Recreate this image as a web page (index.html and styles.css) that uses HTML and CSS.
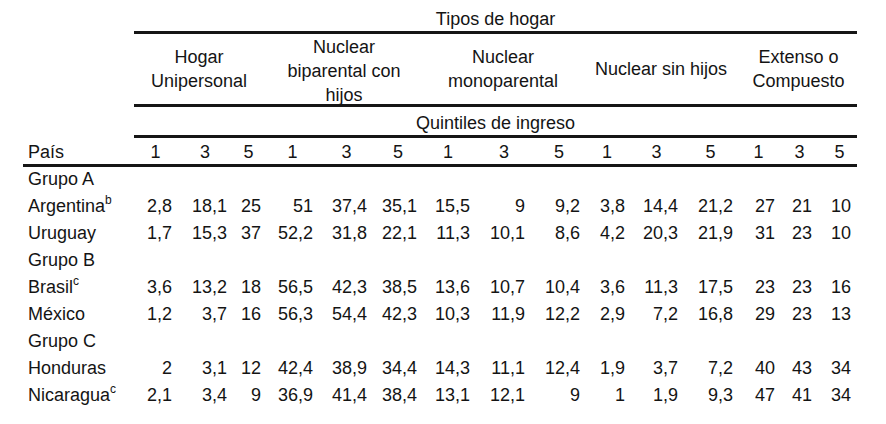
FILE: index.html
```html
<!DOCTYPE html>
<html lang="es">
<head>
<meta charset="utf-8">
<title>Tipos de hogar</title>
<link rel="stylesheet" href="styles.css">
</head>
<body>
<table class="tabla">
  <colgroup>
    <col class="c0"><col class="c1"><col class="c2"><col class="c3">
    <col class="c4"><col class="c5"><col class="c6">
    <col class="c7"><col class="c8"><col class="c9">
    <col class="c10"><col class="c11"><col class="c12">
    <col class="c13"><col class="c14"><col class="c15">
  </colgroup>
  <thead>
    <tr class="r-tipos">
      <td></td>
      <th colspan="15" class="ruled">Tipos de hogar</th>
    </tr>
    <tr class="r-grupos">
      <td></td>
      <th colspan="3" class="ruled"><div class="gt">Hogar<br>Unipersonal</div></th>
      <th colspan="3" class="ruled"><div class="gt tight">Nuclear<br>biparental con<br>hijos</div></th>
      <th colspan="3" class="ruled"><div class="gt">Nuclear<br>monoparental</div></th>
      <th colspan="3" class="ruled"><div class="gt">Nuclear sin hijos</div></th>
      <th colspan="3" class="ruled"><div class="gt">Extenso o<br>Compuesto</div></th>
    </tr>
    <tr class="r-quint">
      <td></td>
      <th colspan="15" class="ruled">Quintiles de ingreso</th>
    </tr>
    <tr class="r-pais">
      <th class="ruled pais">País</th>
      <th class="ruled">1</th><th class="ruled">3</th><th class="ruled">5</th>
      <th class="ruled">1</th><th class="ruled">3</th><th class="ruled">5</th>
      <th class="ruled">1</th><th class="ruled">3</th><th class="ruled">5</th>
      <th class="ruled">1</th><th class="ruled">3</th><th class="ruled">5</th>
      <th class="ruled">1</th><th class="ruled">3</th><th class="ruled">5</th>
    </tr>
  </thead>
  <tbody class="datos">
    <tr class="grupo"><td class="nombre">Grupo A</td><td colspan="15"></td></tr>
    <tr>
      <td class="nombre">Argentina<sup>b</sup></td>
      <td>2,8</td><td>18,1</td><td>25</td>
      <td>51</td><td>37,4</td><td>35,1</td>
      <td>15,5</td><td>9</td><td>9,2</td>
      <td>3,8</td><td>14,4</td><td>21,2</td>
      <td>27</td><td>21</td><td>10</td>
    </tr>
    <tr>
      <td class="nombre">Uruguay</td>
      <td>1,7</td><td>15,3</td><td>37</td>
      <td>52,2</td><td>31,8</td><td>22,1</td>
      <td>11,3</td><td>10,1</td><td>8,6</td>
      <td>4,2</td><td>20,3</td><td>21,9</td>
      <td>31</td><td>23</td><td>10</td>
    </tr>
    <tr class="grupo"><td class="nombre">Grupo B</td><td colspan="15"></td></tr>
    <tr>
      <td class="nombre">Brasil<sup>c</sup></td>
      <td>3,6</td><td>13,2</td><td>18</td>
      <td>56,5</td><td>42,3</td><td>38,5</td>
      <td>13,6</td><td>10,7</td><td>10,4</td>
      <td>3,6</td><td>11,3</td><td>17,5</td>
      <td>23</td><td>23</td><td>16</td>
    </tr>
    <tr>
      <td class="nombre">México</td>
      <td>1,2</td><td>3,7</td><td>16</td>
      <td>56,3</td><td>54,4</td><td>42,3</td>
      <td>10,3</td><td>11,9</td><td>12,2</td>
      <td>2,9</td><td>7,2</td><td>16,8</td>
      <td>29</td><td>23</td><td>13</td>
    </tr>
    <tr class="grupo"><td class="nombre">Grupo C</td><td colspan="15"></td></tr>
    <tr>
      <td class="nombre">Honduras</td>
      <td>2</td><td>3,1</td><td>12</td>
      <td>42,4</td><td>38,9</td><td>34,4</td>
      <td>14,3</td><td>11,1</td><td>12,4</td>
      <td>1,9</td><td>3,7</td><td>7,2</td>
      <td>40</td><td>43</td><td>34</td>
    </tr>
    <tr>
      <td class="nombre">Nicaragua<sup>c</sup></td>
      <td>2,1</td><td>3,4</td><td>9</td>
      <td>36,9</td><td>41,4</td><td>38,4</td>
      <td>13,1</td><td>12,1</td><td>9</td>
      <td>1</td><td>1,9</td><td>9,3</td>
      <td>47</td><td>41</td><td>34</td>
    </tr>
  </tbody>
</table>
</body>
</html>
```
FILE: styles.css
```css
* { box-sizing: border-box; }

body {
  margin: 0;
  background: #ffffff;
  color: #141414;
  font-family: "Liberation Sans", Arial, Helvetica, sans-serif;
  font-size: 18px;
}

.tabla {
  margin: 8px 0 0 23px;
  width: 834px;
  table-layout: fixed;
  border-collapse: separate;
  border-spacing: 0;
}

.c0 { width: 111px; }
.c1 { width: 43px; }
.c2 { width: 56px; }
.c3 { width: 31px; }
.c4 { width: 57px; }
.c5 { width: 51px; }
.c6 { width: 52px; }
.c7 { width: 48px; }
.c8 { width: 64px; }
.c9 { width: 46px; }
.c10 { width: 50px; }
.c11 { width: 49px; }
.c12 { width: 59px; }
.c13 { width: 37px; }
.c14 { width: 45px; }
.c15 { width: 35px; }

.tabla th,
.tabla td {
  padding: 0;
  font-weight: normal;
  white-space: nowrap;
}

.tabla th { text-align: center; }

.ruled { border-bottom: 3px solid #161616; }

.r-tipos th,
.r-tipos td { line-height: 23px; }

.r-grupos th,
.r-grupos td {
  vertical-align: middle;
  line-height: 24px;
}

.gt { line-height: 24px; }
.gt.tight { margin: 1px 0 -3px; }

.r-quint th,
.r-quint td {
  padding-top: 4px;
  line-height: 24px;
}

.r-pais th {
  padding-top: 2px;
  line-height: 24px;
}

.r-pais .pais {
  text-align: left;
  padding-left: 5px;
}

.datos td {
  line-height: 25px;
  padding-bottom: 2px;
  text-align: right;
}

.datos td.nombre {
  text-align: left;
  padding-left: 5px;
}

.datos sup {
  font-size: 12px;
  line-height: 0;
  vertical-align: 8px;
}

.datos td:nth-child(2) { padding-right: 5px; }
.datos td:nth-child(3) { padding-right: 6px; }
.datos td:nth-child(4) { padding-right: 3px; }
.datos td:nth-child(5) { padding-right: 8px; }
.datos td:nth-child(6) { padding-right: 5px; }
.datos td:nth-child(7) { padding-right: 7px; }
.datos td:nth-child(8) { padding-right: 2px; }
.datos td:nth-child(9) { padding-right: 11px; }
.datos td:nth-child(10) { padding-right: 2px; }
.datos td:nth-child(11) { padding-right: 7px; }
.datos td:nth-child(12) { padding-right: 3px; }
.datos td:nth-child(13) { padding-right: 7px; }
.datos td:nth-child(14) { padding-right: 2px; }
.datos td:nth-child(15) { padding-right: 10px; }
.datos td:nth-child(16) { padding-right: 6px; }
```
